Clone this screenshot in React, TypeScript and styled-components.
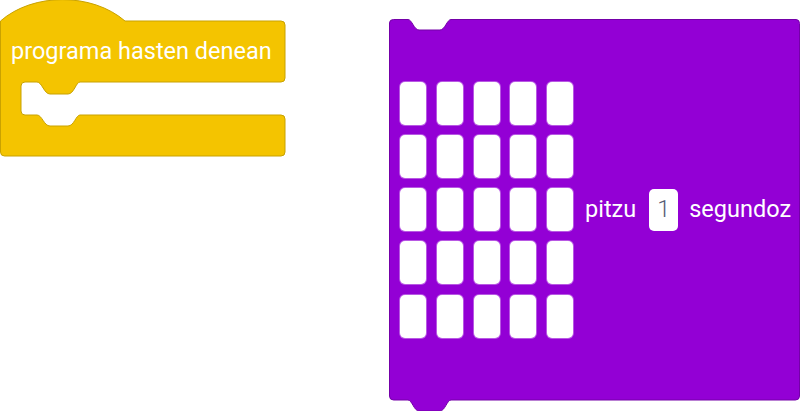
import React from 'react';
import styled, { createGlobalStyle } from 'styled-components';

const GlobalStyle = createGlobalStyle`
  html, body {
    margin: 0;
    padding: 0;
    background: #ffffff;
  }
  body {
    font-family: Roboto, "Noto Sans", Arial, sans-serif;
  }
`;

const Workspace = styled.div`
  position: relative;
  width: 801px;
  height: 411px;
  overflow: hidden;
  background: #ffffff;
`;

const BlockWrap = styled.div<{ $x: number; $y: number; $w: number; $h: number }>`
  position: absolute;
  left: ${p => p.$x}px;
  top: ${p => p.$y}px;
  width: ${p => p.$w}px;
  height: ${p => p.$h}px;
`;

const Shape = styled.svg`
  position: absolute;
  left: 0;
  top: 0;
  overflow: visible;
`;

const BlockBody = styled.div`
  position: relative;
  display: flex;
  flex-direction: column;
  height: 100%;
`;

const HatRow = styled.div`
  display: flex;
  align-items: center;
  height: 61px;
  margin-top: 21px;
  padding-left: 11px;
`;

const Label = styled.span`
  color: #ffffff;
  font-size: 23.5px;
  font-weight: 400;
  white-space: nowrap;
  line-height: 1;
`;

const StatementRow = styled.div`
  position: relative;
  display: flex;
  align-items: center;
  height: 100%;
  padding-left: 11px;
`;

const LedGrid = styled.div`
  display: grid;
  grid-template-columns: repeat(5, 26px);
  grid-auto-rows: 43px;
  column-gap: 10.75px;
  row-gap: 10.25px;
  margin-right: 12px;
`;

const Led = styled.div<{ $on: boolean }>`
  border-radius: 5px;
  background: ${p => (p.$on ? '#ffffff' : '#ffffff')};
  box-shadow: 0 0 0 1px rgba(255, 255, 255, 0.35);
`;

const NumberField = styled.div`
  display: flex;
  align-items: center;
  justify-content: center;
  width: 29px;
  height: 42px;
  margin: 0 11px 0 13px;
  border-radius: 5px;
  background: #ffffff;
  color: #575e75;
  font-size: 23.5px;
  font-weight: 300;
  line-height: 1;
`;

const yellowPath =
  'M 0.5 21 C 33 -7.5, 92 -7.5, 125 21 H 281 Q 285 21 285 25 V 78 Q 285 82 281 82 H 80 ' +
  'C 76 82 74 94 68 94 H 50 C 44 94 42 82 37 82 H 25 Q 21 82 21 86 V 111 Q 21 115 25 115 H 37 ' +
  'C 42 115 44 126 50 126 H 68 C 74 126 76 115 80 115 H 281 Q 285 115 285 119 V 152 Q 285 156 281 156 ' +
  'H 4.5 Q 0.5 156 0.5 152 Z';

const purplePath =
  'M 0.5 4 Q 0.5 0.5 4.5 0.5 H 19 C 23 0.5 25 11 30 11 H 51 C 56 11 58 0.5 62 0.5 H 407 ' +
  'Q 410.5 0.5 410.5 4.5 V 377 Q 410.5 381 406.5 381 H 62 C 58 381 56 392 51 392 H 30 ' +
  'C 25 392 23 381 19 381 H 4.5 Q 0.5 381 0.5 377 Z';

const leds = Array.from({ length: 25 }, (_, i) => i);

const App = () => {
  return (
    <>
      <GlobalStyle />
      <Workspace>
        <BlockWrap $x={0} $y={0} $w={286} $h={157}>
          <Shape width={286} height={157}>
            <path d={yellowPath} fill="#f4c400" stroke="#c9a200" strokeWidth={1} />
          </Shape>
          <BlockBody>
            <HatRow>
              <Label>programa hasten denean</Label>
            </HatRow>
          </BlockBody>
        </BlockWrap>

        <BlockWrap $x={389} $y={19} $w={412} $h={381}>
          <Shape width={412} height={392}>
            <path d={purplePath} fill="#9300d5" stroke="#7400a8" strokeWidth={1} />
          </Shape>
          <StatementRow>
            <LedGrid>
              {leds.map(i => (
                <Led key={i} $on={false} />
              ))}
            </LedGrid>
            <Label>pitzu</Label>
            <NumberField>1</NumberField>
            <Label>segundoz</Label>
          </StatementRow>
        </BlockWrap>
      </Workspace>
    </>
  );
};

export default App;
